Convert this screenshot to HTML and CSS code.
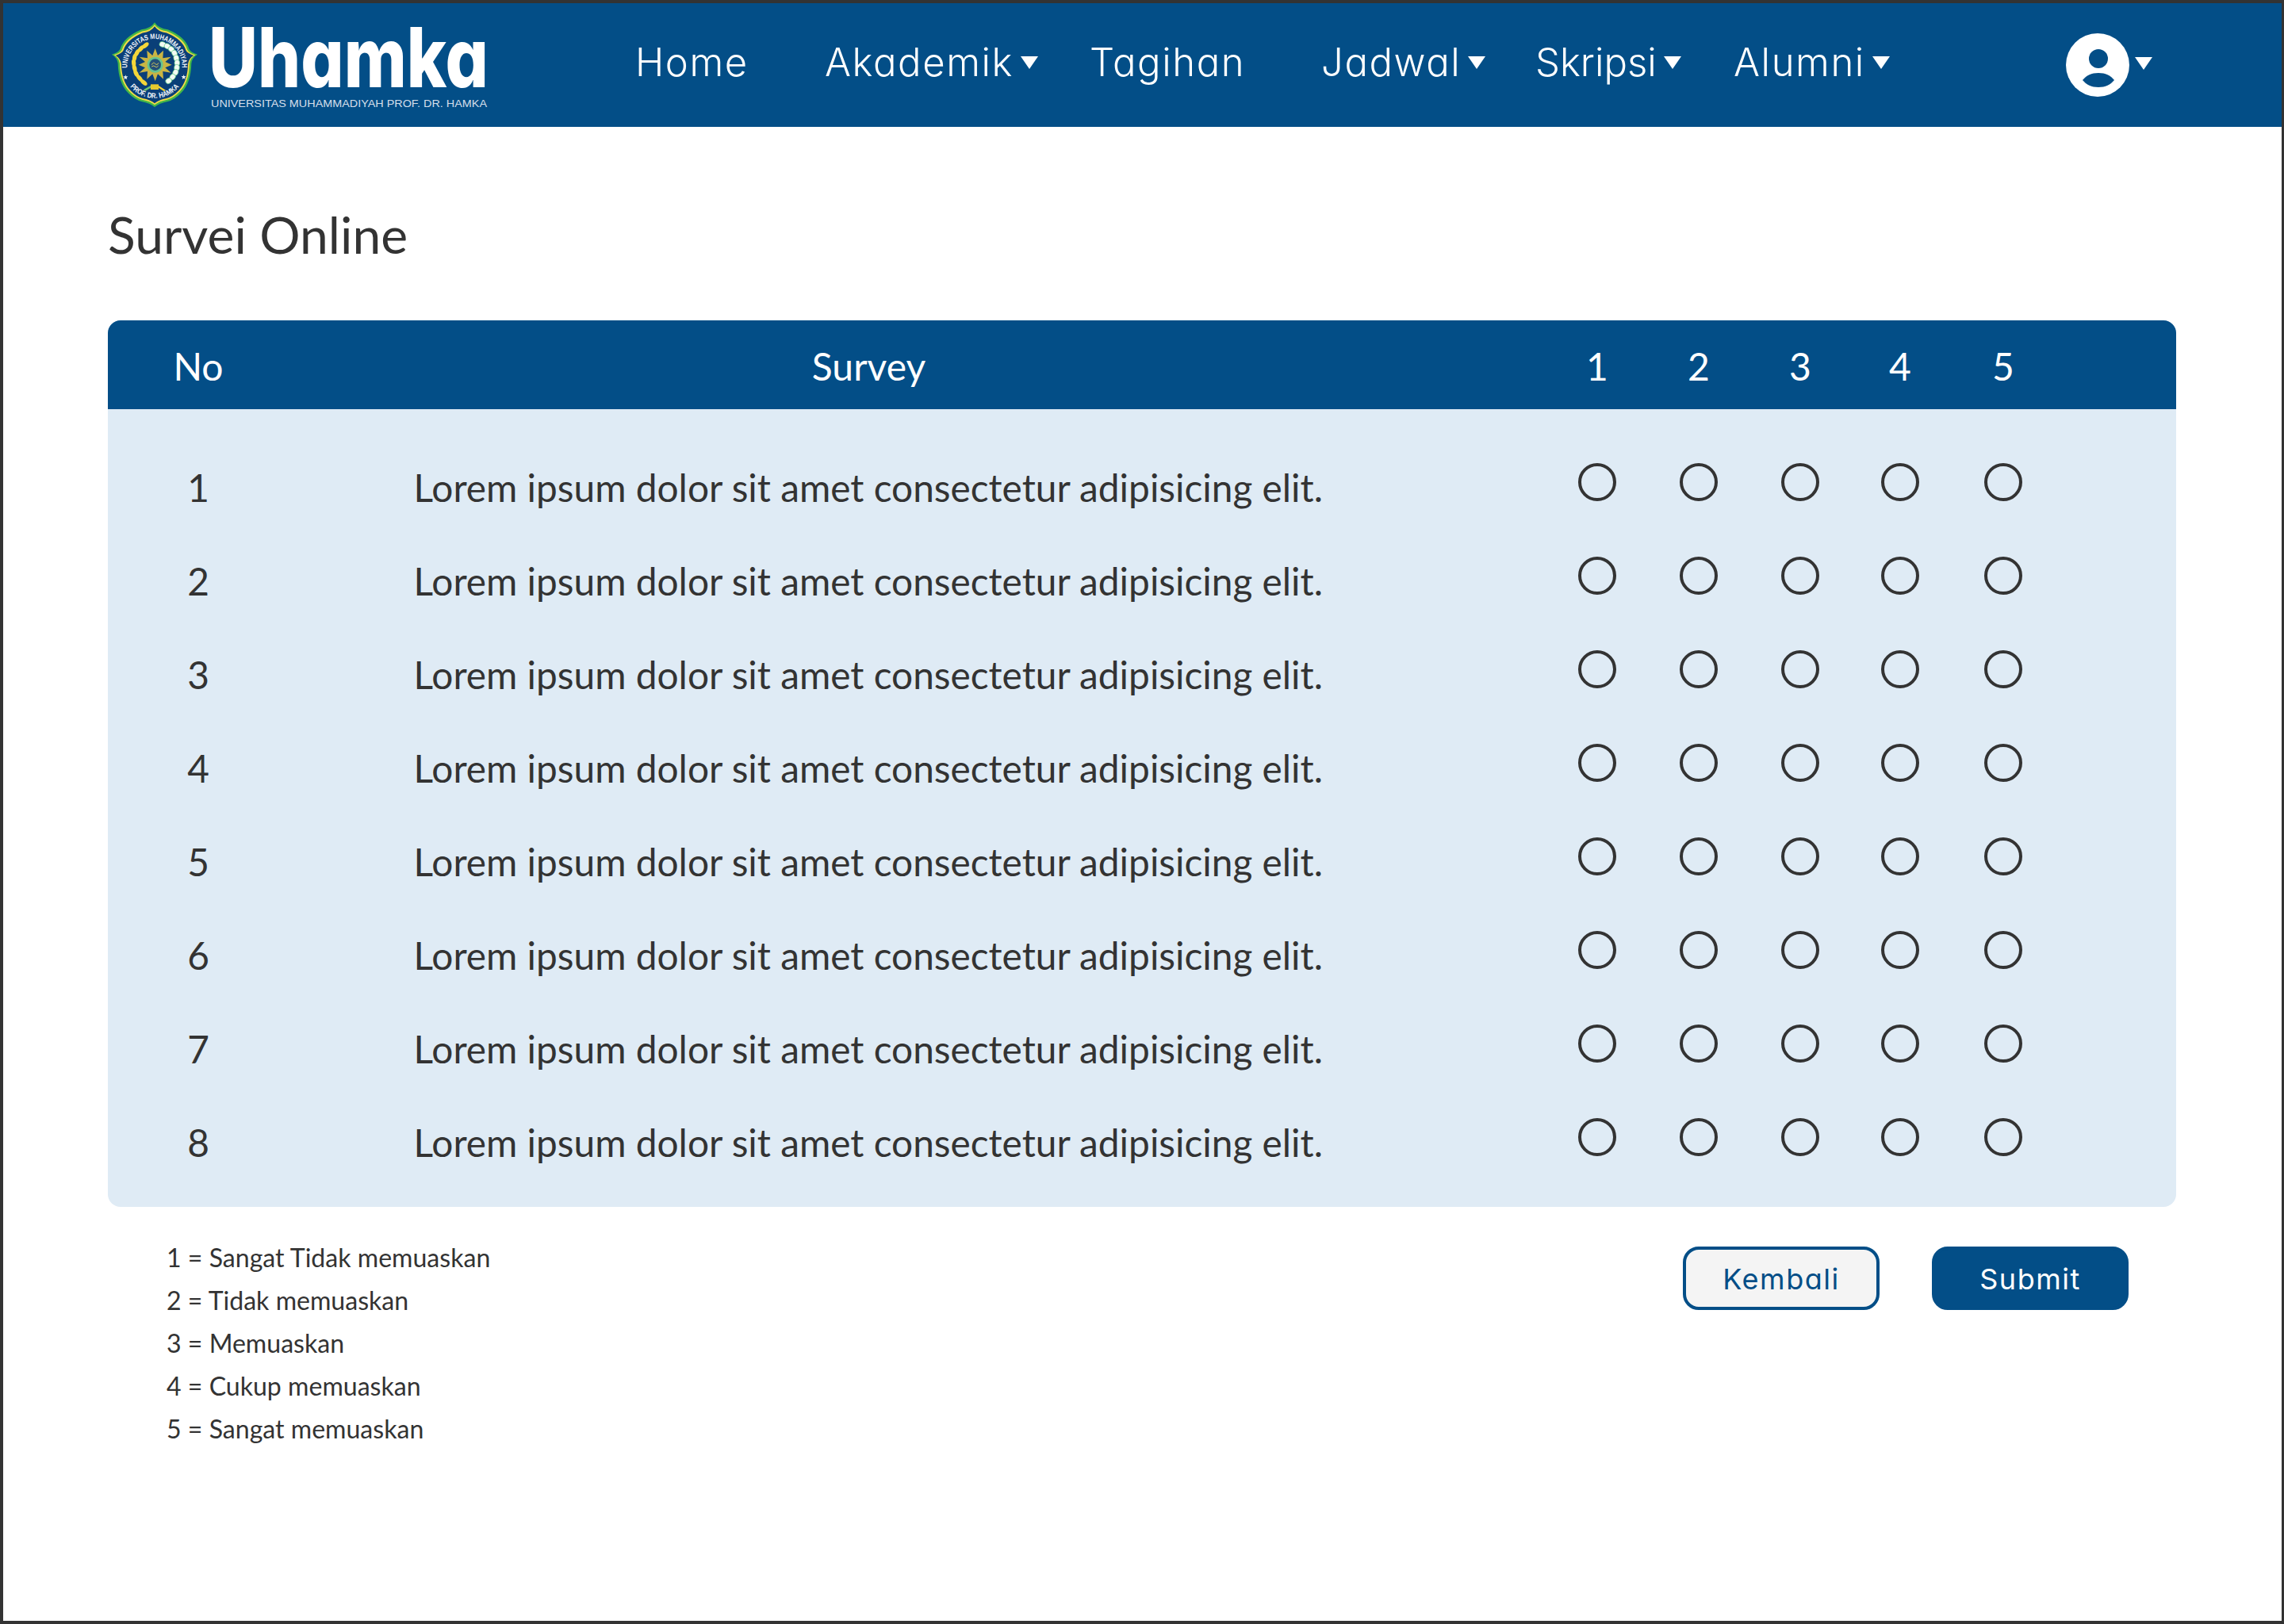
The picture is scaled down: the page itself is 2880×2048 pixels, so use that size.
FILE: index.html
```html
<!DOCTYPE html>
<html lang="id">
<head>
<meta charset="utf-8">
<title>Survei Online</title>
<link rel="stylesheet" href="styles.css">
</head>
<body>
<div class="frame">
  <header class="topbar">
    <svg class="logo" viewBox="130 4 490 156" width="490" height="156" role="img" aria-label="Uhamka">
      <defs>
        <path id="shield" d="M195 25Q210 48 245 52Q312 80 325 125Q332 138 357 146Q337 158 334 180Q332 255 295 292Q270 318 245 324Q212 330 195 345Q178 330 145 324Q120 318 95 292Q58 255 56 180Q53 158 33 146Q58 138 65 125Q78 80 145 52Q180 48 195 25Z"/>
        <path id="arcTop" d="M97 226A104 104 0 1 1 293 226"/>
        <path id="arcBottom" d="M81 231A121 121 0 0 0 309 231"/>
        <ellipse id="leafY" cx="0" cy="0" rx="15" ry="8" fill="#f4d63a"/>
        <ellipse id="leafW" cx="0" cy="0" rx="12" ry="10" fill="#f3fbf3" stroke="#5fcf86" stroke-width="2"/>
      </defs>
      <g transform="translate(130 20) scale(.3333)">
        <use href="#shield" fill="#43b649"/>
        <use href="#shield" fill="#f2dc45" transform="translate(195 187) scale(.95) translate(-195 -187)"/>
        <use href="#shield" fill="#0a3f78" transform="translate(195 187) scale(.91) translate(-195 -187)"/>
        <text class="seal-text"><textPath href="#arcTop" startOffset="50%" text-anchor="middle" textLength="338" lengthAdjust="spacingAndGlyphs">UNIVERSITAS MUHAMMADIYAH</textPath></text>
        <text class="seal-text"><textPath href="#arcBottom" startOffset="50%" text-anchor="middle" textLength="212" lengthAdjust="spacingAndGlyphs">PROF. DR. HAMKA</textPath></text>
        <polygon fill="#e8eef5" points="85,223 87,229 94,229 89,234 91,241 85,237 79,241 81,234 76,229 83,229"/>
        <polygon fill="#e8eef5" points="305,222 307,228 314,228 309,233 311,240 305,236 299,240 301,233 296,228 303,228"/>
        <polygon fill="#c9b544" points="197,123 207,150 228,131 226,160 257,155 235,174 260,185 235,196 257,215 226,210 228,239 207,220 197,247 187,220 166,239 168,210 137,215 159,196 134,185 159,174 137,155 168,160 166,131 187,150"/>
        <circle cx="197" cy="185" r="30" fill="#67c58f"/>
        <circle cx="197" cy="185" r="22" fill="#234f78"/>
        <path d="M184 185q6-12 13-4t13-3M184 192q7-6 13 0t12-3" fill="none" stroke="#d9c95a" stroke-width="3"/>
        <use href="#leafY" transform="translate(160 112) rotate(-40)"/>
        <use href="#leafY" transform="translate(143 124) rotate(-50)"/>
        <use href="#leafY" transform="translate(128 140) rotate(-65)"/>
        <use href="#leafY" transform="translate(119 158) rotate(-80)"/>
        <use href="#leafY" transform="translate(116 178) rotate(85)"/>
        <use href="#leafY" transform="translate(119 198) rotate(75)"/>
        <use href="#leafY" transform="translate(125 218) rotate(65)"/>
        <use href="#leafY" transform="translate(138 236) rotate(50)"/>
        <use href="#leafY" transform="translate(154 252) rotate(40)"/>
        <use href="#leafW" transform="translate(225 108) rotate(15)"/>
        <use href="#leafW" transform="translate(243 115) rotate(25)"/>
        <use href="#leafW" transform="translate(258 126) rotate(40)"/>
        <use href="#leafW" transform="translate(270 141) rotate(60)"/>
        <use href="#leafW" transform="translate(277 160) rotate(75)"/>
        <use href="#leafW" transform="translate(280 178) rotate(90)"/>
        <use href="#leafW" transform="translate(279 196) rotate(100)"/>
        <use href="#leafW" transform="translate(274 214) rotate(115)"/>
        <use href="#leafW" transform="translate(263 231) rotate(130)"/>
        <use href="#leafW" transform="translate(248 246) rotate(145)"/>
        <path d="M152 280L180 264L180 272L160 284Z" fill="#6fc66f"/>
        <path d="M238 282L210 264L210 272L230 285Z" fill="#f4d63a"/>
        <rect x="180" y="259" width="30" height="20" fill="#e6c92e"/>
      </g>
      <text class="wordmark" x="263" y="110" textLength="353" lengthAdjust="spacingAndGlyphs">Uhamka</text>
      <text class="tagline" x="266" y="135" textLength="348" lengthAdjust="spacingAndGlyphs">UNIVERSITAS MUHAMMADIYAH PROF. DR. HAMKA</text>
    </svg>
    <nav class="nav">
      <a class="nav-link">Home</a>
      <a class="nav-link">Akademik<svg class="caret" viewBox="0 0 22 16"><path d="M0 0H22L11 16Z"/></svg></a>
      <a class="nav-link">Tagihan</a>
      <a class="nav-link">Jadwal<svg class="caret" viewBox="0 0 22 16"><path d="M0 0H22L11 16Z"/></svg></a>
      <a class="nav-link nav-link--tight">Skripsi<svg class="caret" viewBox="0 0 22 16"><path d="M0 0H22L11 16Z"/></svg></a>
      <a class="nav-link">Alumni<svg class="caret" viewBox="0 0 22 16"><path d="M0 0H22L11 16Z"/></svg></a>
    </nav>
    <div class="user">
      <svg class="avatar" viewBox="0 0 80 80">
        <circle cx="40" cy="40" r="40" fill="#fff"/>
        <ellipse cx="41" cy="32" rx="12" ry="12" fill="#034e87"/>
        <path d="M21 59C26 53 32 50 41 50C50 50 56 53 61 59C56 65 50 68 41 68C32 68 26 65 21 59Z" fill="#034e87"/>
      </svg>
      <svg class="caret" viewBox="0 0 22 16"><path d="M0 0H22L11 16Z"/></svg>
    </div>
  </header>
  <main class="content">
    <h1 class="title">Survei Online</h1>
    <section class="survey">
      <div class="survey-row survey-head">
        <div class="cell-no">No</div><div class="cell-q cell-q--head">Survey</div>
        <div class="cell-n">1</div><div class="cell-n">2</div><div class="cell-n">3</div><div class="cell-n">4</div><div class="cell-n">5</div>
      </div>
      <div class="survey-body">
        <div class="survey-row"><div class="cell-no">1</div><div class="cell-q">Lorem ipsum dolor sit amet consectetur adipisicing elit.</div><div class="cell-n"><input class="radio" type="radio" name="q1"></div><div class="cell-n"><input class="radio" type="radio" name="q1"></div><div class="cell-n"><input class="radio" type="radio" name="q1"></div><div class="cell-n"><input class="radio" type="radio" name="q1"></div><div class="cell-n"><input class="radio" type="radio" name="q1"></div></div>
        <div class="survey-row"><div class="cell-no">2</div><div class="cell-q">Lorem ipsum dolor sit amet consectetur adipisicing elit.</div><div class="cell-n"><input class="radio" type="radio" name="q2"></div><div class="cell-n"><input class="radio" type="radio" name="q2"></div><div class="cell-n"><input class="radio" type="radio" name="q2"></div><div class="cell-n"><input class="radio" type="radio" name="q2"></div><div class="cell-n"><input class="radio" type="radio" name="q2"></div></div>
        <div class="survey-row"><div class="cell-no">3</div><div class="cell-q">Lorem ipsum dolor sit amet consectetur adipisicing elit.</div><div class="cell-n"><input class="radio" type="radio" name="q3"></div><div class="cell-n"><input class="radio" type="radio" name="q3"></div><div class="cell-n"><input class="radio" type="radio" name="q3"></div><div class="cell-n"><input class="radio" type="radio" name="q3"></div><div class="cell-n"><input class="radio" type="radio" name="q3"></div></div>
        <div class="survey-row"><div class="cell-no">4</div><div class="cell-q">Lorem ipsum dolor sit amet consectetur adipisicing elit.</div><div class="cell-n"><input class="radio" type="radio" name="q4"></div><div class="cell-n"><input class="radio" type="radio" name="q4"></div><div class="cell-n"><input class="radio" type="radio" name="q4"></div><div class="cell-n"><input class="radio" type="radio" name="q4"></div><div class="cell-n"><input class="radio" type="radio" name="q4"></div></div>
        <div class="survey-row"><div class="cell-no">5</div><div class="cell-q">Lorem ipsum dolor sit amet consectetur adipisicing elit.</div><div class="cell-n"><input class="radio" type="radio" name="q5"></div><div class="cell-n"><input class="radio" type="radio" name="q5"></div><div class="cell-n"><input class="radio" type="radio" name="q5"></div><div class="cell-n"><input class="radio" type="radio" name="q5"></div><div class="cell-n"><input class="radio" type="radio" name="q5"></div></div>
        <div class="survey-row"><div class="cell-no">6</div><div class="cell-q">Lorem ipsum dolor sit amet consectetur adipisicing elit.</div><div class="cell-n"><input class="radio" type="radio" name="q6"></div><div class="cell-n"><input class="radio" type="radio" name="q6"></div><div class="cell-n"><input class="radio" type="radio" name="q6"></div><div class="cell-n"><input class="radio" type="radio" name="q6"></div><div class="cell-n"><input class="radio" type="radio" name="q6"></div></div>
        <div class="survey-row"><div class="cell-no">7</div><div class="cell-q">Lorem ipsum dolor sit amet consectetur adipisicing elit.</div><div class="cell-n"><input class="radio" type="radio" name="q7"></div><div class="cell-n"><input class="radio" type="radio" name="q7"></div><div class="cell-n"><input class="radio" type="radio" name="q7"></div><div class="cell-n"><input class="radio" type="radio" name="q7"></div><div class="cell-n"><input class="radio" type="radio" name="q7"></div></div>
        <div class="survey-row"><div class="cell-no">8</div><div class="cell-q">Lorem ipsum dolor sit amet consectetur adipisicing elit.</div><div class="cell-n"><input class="radio" type="radio" name="q8"></div><div class="cell-n"><input class="radio" type="radio" name="q8"></div><div class="cell-n"><input class="radio" type="radio" name="q8"></div><div class="cell-n"><input class="radio" type="radio" name="q8"></div><div class="cell-n"><input class="radio" type="radio" name="q8"></div></div>
      </div>
    </section>
    <div class="footer-row">
      <ul class="legend">
        <li>1 = Sangat Tidak memuaskan</li>
        <li>2 = Tidak memuaskan</li>
        <li>3 = Memuaskan</li>
        <li>4 = Cukup memuaskan</li>
        <li>5 = Sangat memuaskan</li>
      </ul>
      <div class="actions">
        <button class="btn btn--outline" type="button">Kembali</button>
        <button class="btn btn--solid" type="button">Submit</button>
      </div>
    </div>
  </main>
</div>
</body>
</html>
```
FILE: styles.css
```css
* { box-sizing: border-box; }
html, body { margin: 0; padding: 0; }
body { background: #fff; color: #333; font-family: "Lato", "Liberation Sans", sans-serif; }
.frame {
  height: 2048px;
  border: 4px solid #333;
  border-right-width: 3px;
  background: #fff;
  overflow: hidden;
}
.topbar {
  height: 156px;
  background: #034e87;
  display: flex;
  align-items: center;
  padding-left: 126px;
  padding-right: 163px;
  color: #fff;
}
.logo { flex: none; display: block; }
.seal-text { font: 700 28px "Liberation Sans", sans-serif; fill: #f1f5fa; }
.wordmark { font: 800 104px "Inter", "Liberation Sans", sans-serif; font-feature-settings: "cv11"; fill: #fff; }
.tagline { font: 400 13.5px "Liberation Sans", sans-serif; fill: #d5dfea; }
.nav {
  display: grid;
  grid-template-columns: 239px 334px 292px 270px 250px 200px;
  align-items: center;
  margin-left: 181px;
}
.nav-link {
  display: flex;
  align-items: center;
  gap: 9px;
  font: 350 49px/60px "Inter", "Liberation Sans", sans-serif;
  font-feature-settings: "cv11";
  letter-spacing: 1.6px;
  position: relative;
  top: -3px;
  white-space: nowrap;
}
.nav-link--tight { letter-spacing: 0; }
.caret { width: 22px; height: 16px; fill: #fff; flex: none; }
.user { margin-left: auto; display: flex; align-items: center; gap: 7px; }
.user .caret { position: relative; top: -2px; }
.avatar { width: 80px; height: 80px; display: block; }
.content { padding: 0 133px 0 132px; }
.title {
  margin: 0;
  padding-top: 96px;
  height: 244px;
  font: 400 64.2px/80px "Lato", sans-serif;
  color: #333;
}
.survey { border-radius: 16px; overflow: hidden; background: #dfebf5; }
.survey-row {
  display: grid;
  grid-template-columns: 228px 1586px 128px 128px 128px 124px 136px 1fr;
  height: 118px;
  font-size: 47.8px;
  line-height: 121px;
  color: #333;
}
.survey-head { height: 112px; line-height: 116px; font-size: 48px; background: #034e87; color: #fff; }
.survey-body { padding: 38px 0 24px; }
.cell-no { text-align: center; }
.cell-q { padding-left: 157.5px; white-space: nowrap; }
.cell-q--head { padding: 0 123px 0 0; text-align: center; }
.cell-n { text-align: center; }
.radio {
  appearance: none;
  -webkit-appearance: none;
  display: block;
  width: 48px;
  height: 48px;
  margin: 30px auto 0;
  border: 4px solid #333;
  border-radius: 50%;
  background: transparent;
}
.footer-row { display: flex; justify-content: space-between; align-items: flex-start; }
.legend {
  list-style: none;
  margin: 37px 0 0 74px;
  padding: 0;
  font-size: 32.1px;
  line-height: 54px;
  color: #333;
}
.actions { display: flex; gap: 66px; margin: 50px 60px 0 0; }
.btn {
  width: 248px;
  height: 80px;
  padding: 2px 0 0;
  border-radius: 20px;
  border: 4px solid #034e87;
  font: 400 36px "Inter", "Liberation Sans", sans-serif;
  font-feature-settings: "cv11";
  letter-spacing: 1.5px;
}
.btn--outline { background: #f4f4f4; color: #034e87; }
.btn--solid { background: #034e87; color: #fff; }
```
